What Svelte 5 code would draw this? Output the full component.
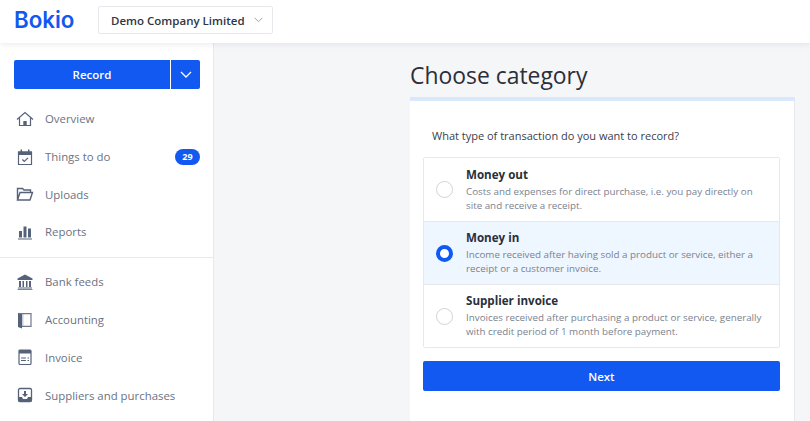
<script>
  const options = [
    { title: 'Money out', text: 'Costs and expenses for direct purchase, i.e. you pay directly on site and receive a receipt.', on: false },
    { title: 'Money in', text: 'Income received after having sold a product or service, either a receipt or a customer invoice.', on: true },
    { title: 'Supplier invoice', text: 'Invoices received after purchasing a product or service, generally with credit period of 1 month before payment.', on: false }
  ];
</script>

<div class="page">
  <header class="top">
    <div class="logo">Bokio</div>
    <div class="company">
      <span>Demo Company Limited</span>
      <svg width="9" height="6" viewBox="0 0 9 6" fill="none" stroke="#9aa3ae" stroke-width="1"><path d="M.7.9 4.500 4.700 8.300.9"/></svg>
    </div>
  </header>
  <div class="body">
    <aside class="side">
      <div class="record">
        <div class="rec-main">Record</div>
        <div class="rec-caret">
          <svg width="12" height="7" viewBox="0 0 12 7" fill="none" stroke="#fff" stroke-width="1.300"><path d="M1 1l5 5 5-5"/></svg>
        </div>
      </div>
      <nav class="group first">
        <div class="item">
          <svg class="ico" viewBox="0 0 18 18" fill="none" stroke="#56627a" stroke-width="1.200"><path d="M1 9.500 9 2.500l8 7M3.500 8v7.500h11V8"/><path fill="#56627a" stroke="none" d="M7.300 11h3.400v4.500H7.300z"/></svg>
          <span>Overview</span>
        </div>
        <div class="item">
          <svg class="ico" viewBox="0 0 18 18" fill="none" stroke="#56627a" stroke-width="1.200"><path d="M2.500 4h13v12.500h-13z"/><path fill="#56627a" stroke="none" d="M2 3.500h14V7H2zM4.500 1.500h1.500V4H4.500zM12 1.500h1.500V4H12z"/><path d="M6.300 11.500l2 2 3.700-3.700"/></svg>
          <span>Things to do</span>
          <b class="badge">29</b>
        </div>
        <div class="item">
          <svg class="ico" viewBox="0 0 18 18" fill="none" stroke="#56627a" stroke-width="1.400"><path d="M1.500 15V3.500h5L8 5h6.500v2.500M1.500 15h12.500l2.500-7.500H4z"/></svg>
          <span>Uploads</span>
        </div>
        <div class="item">
          <svg class="ico" viewBox="0 0 18 18" fill="#56627a"><path d="M3 8h3v6.500H3zM7.500 3.500h3v11h-3zM12 5.500h3v9h-3zM2 15.500h14v1H2z"/></svg>
          <span>Reports</span>
        </div>
      </nav>
      <nav class="group">
        <div class="item">
          <svg class="ico" viewBox="0 0 18 18" fill="#56627a"><path d="M9 1.500l7.500 4v1.500h-15V5.500zM3 8h2v6H3zM6.500 8h1.500v6H6.500zM10 8h1.500v6H10zM13 8h2v6h-2zM2 14.500h14v1H2zM1.500 16h15v.8h-15z"/></svg>
          <span>Bank feeds</span>
        </div>
        <div class="item">
          <svg class="ico" viewBox="0 0 18 18" fill="none"><path fill="#56627a" d="M2 2h4v15.500l-4-1.500z"/><path fill="#c9d0da" d="M6 3h1.500v12.500H6z"/><path stroke="#6f7a8c" stroke-width="1.200" d="M3 2.600h12v12.800H6"/></svg>
          <span>Accounting</span>
        </div>
        <div class="item">
          <svg class="ico" viewBox="0 0 18 18" fill="none" stroke="#56627a" stroke-width="1.200"><rect x="3" y="2" width="12" height="14.500" rx="1"/><path fill="#56627a" stroke="none" d="M3 2h12v3.500H3zM5 9.500h5v1H5zM5 12h5v1H5zM11.500 9.500h1.500v1h-1.500zM11.500 12h1.500v1h-1.500z"/></svg>
          <span>Invoice</span>
        </div>
        <div class="item">
          <svg class="ico" viewBox="0 0 18 18"><rect x="2.500" y="2.500" width="13" height="13" rx="1.500" fill="none" stroke="#56627a" stroke-width="1.300"/><path fill="#56627a" d="M2.500 11h3.500l1 2h4l1-2h3.500v5h-13zM8 5h2v3h2L9 11 6 8h2z"/></svg>
          <span>Suppliers and purchases</span>
        </div>
      </nav>
    </aside>
    <main class="main">
      <h1>Choose category</h1>
      <section class="card">
        <p class="question">What type of transaction do you want to record?</p>
        <div class="list">
          {#each options as o}
            <div class="row" class:on={o.on}>
              <span class="radio"></span>
              <div class="copy">
                <div class="title">{o.title}</div>
                <div class="desc">{o.text}</div>
              </div>
            </div>
          {/each}
        </div>
        <div class="next">Next</div>
      </section>
    </main>
  </div>
</div>

<style>
  :global(body) { margin: 0; font-family: "Open Sans", sans-serif; overflow: hidden; }
  .page { width: 810px; height: 421px; overflow: hidden; background: #f5f6f8; display: flex; flex-direction: column; }
  .top { position: relative; z-index: 1; height: 43px; flex: none; background: #fff; box-shadow: 0 1px 6px rgba(30, 40, 60, .1); display: flex; align-items: center; padding-left: 14px; box-sizing: border-box; }
  .logo { width: 84px; font-family: "Inter", sans-serif; font-size: 22.300px; font-weight: 600; color: #1159f0; line-height: 1; margin-top: -3px; }
  .company { width: 175px; height: 28px; margin-top: -3px; box-sizing: border-box; border: 1px solid #e6e8ec; border-radius: 2px; display: flex; align-items: center; justify-content: space-between; padding: 0 9px 0 12px; font-size: 11.500px; font-weight: 600; color: #2f3542; white-space: nowrap; }
  .body { flex: 1; display: flex; min-height: 0; }
  .side { width: 214px; flex: none; box-sizing: border-box; background: #fff; border-right: 1px solid #e6e9ee; padding-top: 17px; }
  .record { margin: 0 13px 0 14px; height: 29px; display: flex; gap: 1px; color: #fff; }
  .rec-main { flex: 1; background: #1159f0; border-radius: 2px 0 0 2px; display: flex; align-items: center; justify-content: center; font-size: 11.500px; font-weight: 600; }
  .rec-caret { width: 29px; background: #1159f0; border-radius: 0 2px 2px 0; display: flex; align-items: center; justify-content: center; }
  .group { display: flex; flex-direction: column; }
  .group.first { margin-top: 11px; padding-bottom: 6px; border-bottom: 1px solid #e6e9ee; }
  .group:not(.first) { padding-top: 5.400px; }
  .item { height: 37.700px; display: flex; align-items: center; padding: 0 13px 0 16px; font-size: 11.400px; color: #6a7282; }
  .ico { width: 18px; height: 18px; margin-right: 11px; flex: none; }
  .item span { flex: 1; }
  .badge { width: 25px; height: 16px; border-radius: 8px; background: #1159f0; color: #fff; font-size: 9px; font-weight: 700; display: flex; align-items: center; justify-content: center; }
  .main { flex: 1; padding-left: 196px; }
  h1 { margin: 0; height: 54px; box-sizing: border-box; padding-top: 14px; font-size: 22.900px; line-height: 38px; font-weight: 400; color: #2a2f3a; }
  .card { width: 385px; height: 330px; box-sizing: border-box; background: #fff; border-top: 4px solid #d9e8fd; border-right: 1px solid #e6e9ee; padding: 26px 14px 0 13px; }
  .question { margin: 0 0 12px 9px; font-size: 11px; line-height: 18px; color: #3a404c; }
  .list { border: 1px solid #e6e8ec; border-radius: 2px; }
  .row { height: 63px; box-sizing: border-box; display: flex; align-items: center; padding-left: 12px; background: #fff; }
  .row + .row { border-top: 1px solid #e6e8ec; }
  .row.on { background: #eef6ff; }
  .radio { width: 17px; height: 17px; box-sizing: border-box; border: 1px solid #cfd3da; border-radius: 50%; background: #fff; margin-right: 13px; flex: none; }
  .row.on .radio { border: 4.500px solid #1159f0; }
  .copy { width: 305px; }
  .title { font-size: 11.600px; font-weight: 700; line-height: 16px; color: #2a2f3a; }
  .desc { font-size: 9.800px; line-height: 14px; color: #7a8290; margin-top: 2px; }
  .next { margin-top: 13px; height: 30px; border-radius: 2px; background: #1159f0; color: #fff; display: flex; align-items: center; justify-content: center; font-size: 11.400px; font-weight: 600; }
</style>
